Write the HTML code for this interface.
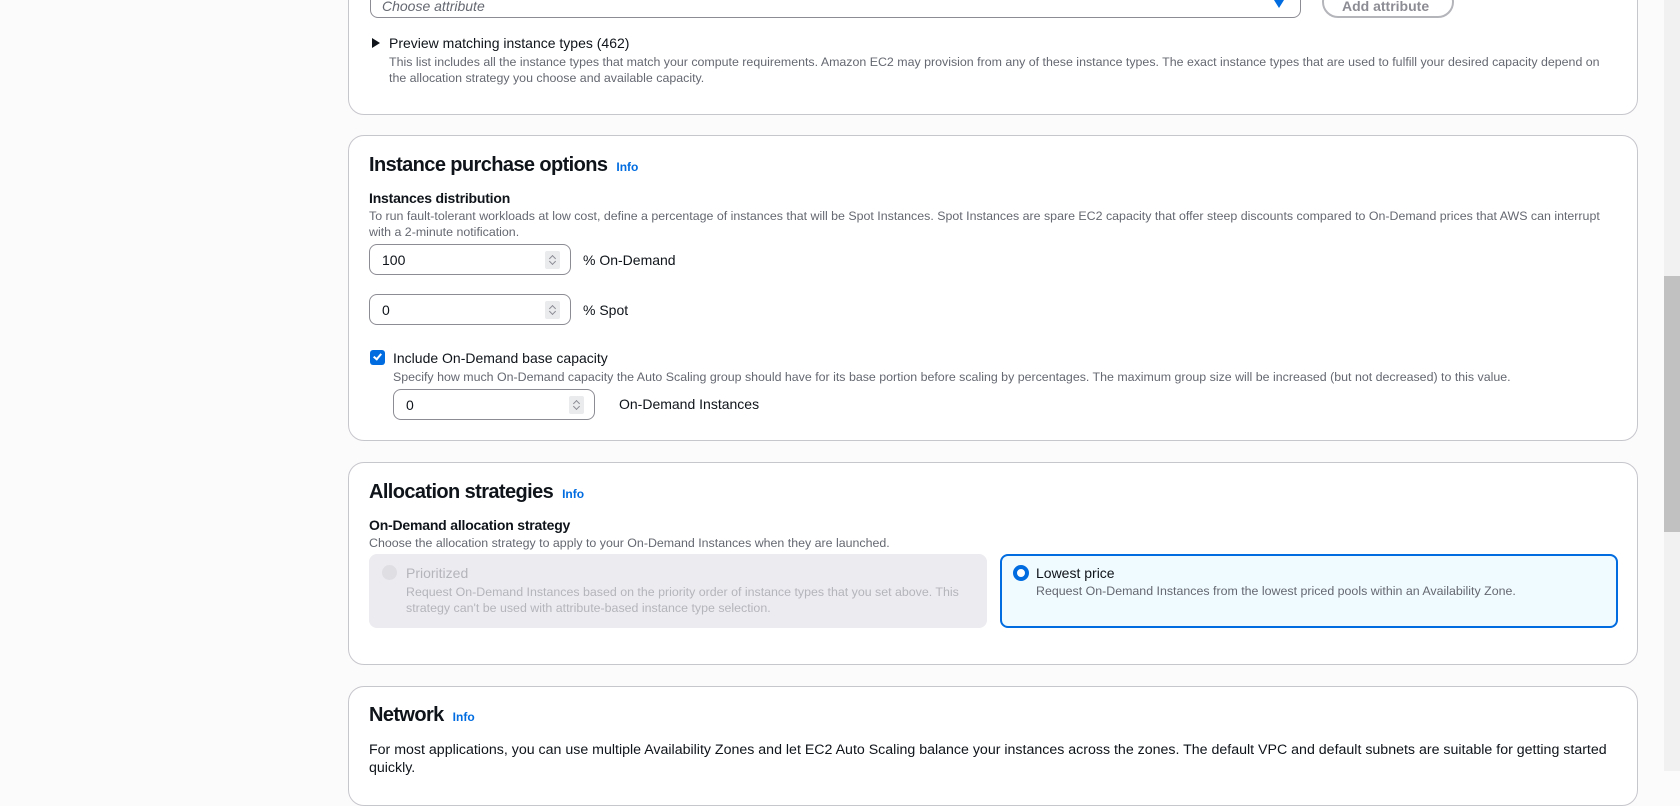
<!DOCTYPE html>
<html><head><style>
*{box-sizing:border-box;margin:0;padding:0}
body{width:1680px;height:771px;overflow:hidden;background:#fbfbfb;font-family:"Liberation Sans",sans-serif;color:#0f141a;position:relative}
.a{position:absolute;white-space:nowrap}
.card{position:absolute;left:348px;width:1290px;background:#fff;border:1px solid #c6c6cd;border-radius:16px}
.h{font-size:20px;font-weight:bold;letter-spacing:-0.6px}
.info{font-size:12px;font-weight:bold;color:#006ce0;letter-spacing:0;margin-left:4px}
.b{font-size:14px;font-weight:bold;letter-spacing:-0.2px}
.d{font-size:12.4px;color:#656871}
.t{font-size:14px}
.inp{position:absolute;width:202px;height:31px;border:1px solid #8c8c94;border-radius:8px;background:#fff;font-size:14px;padding:7px 12px}
.sp{position:absolute;right:10px;top:6px;width:15px;height:18px;background:#e9ebed;border-radius:2px}
.sp:before,.sp:after{content:"";position:absolute;left:5px;width:4px;height:4px;border-left:1px solid #8c8c94;border-top:1px solid #8c8c94}
.sp:before{top:5px;transform:rotate(45deg)}.sp:after{top:8px;transform:rotate(225deg)}
</style></head><body>
<div class="card" style="top:-20px;height:135px"></div>
<div class="a" style="left:370px;top:-12px;width:931px;height:30px;border:1px solid #8c8c94;border-radius:8px;background:#fff"></div>
<div class="a" style="left:382px;top:-2px;font-size:14px;font-style:italic;color:#656871">Choose attribute</div>
<div class="a" style="left:1274px;top:0;width:0;height:0;border-left:5px solid transparent;border-right:5px solid transparent;border-top:8px solid #006ce0"></div>
<div class="a" style="left:1322px;top:-14px;width:132px;height:32px;border:2px solid #b4b4bb;border-radius:20px;background:#fff"></div>
<div class="a" style="left:1342px;top:-2px;font-size:14px;font-weight:bold;color:#8c8c94">Add attribute</div>
<div class="a" style="left:372px;top:38px;width:0;height:0;border-top:5px solid transparent;border-bottom:5px solid transparent;border-left:8px solid #0f141a"></div>
<div class="a t" style="left:389px;top:35px">Preview matching instance types (462)</div>
<div class="a d" style="left:389px;top:54px;line-height:16px">This list includes all the instance types that match your compute requirements. Amazon EC2 may provision from any of these instance types. The exact instance types that are used to fulfill your desired capacity depend on<br>the allocation strategy you choose and available capacity.</div>

<div class="card" style="top:135px;height:306px"></div>
<div class="a h" style="left:369px;top:154px">Instance purchase options <span class="info">Info</span></div>
<div class="a b" style="left:369px;top:190px">Instances distribution</div>
<div class="a d" style="left:369px;top:208px;line-height:16px">To run fault-tolerant workloads at low cost, define a percentage of instances that will be Spot Instances. Spot Instances are spare EC2 capacity that offer steep discounts compared to On-Demand prices that AWS can interrupt<br>with a 2-minute notification.</div>
<div class="inp" style="left:369px;top:244px">100<div class="sp"></div></div>
<div class="a t" style="left:583px;top:252px">% On-Demand</div>
<div class="inp" style="left:369px;top:294px">0<div class="sp"></div></div>
<div class="a t" style="left:583px;top:302px">% Spot</div>
<div class="a" style="left:370px;top:350px;width:15px;height:15px;background:#006ce0;border-radius:3px"></div>
<div class="a" style="left:375px;top:352px;width:5px;height:8px;border-right:2px solid #fff;border-bottom:2px solid #fff;transform:rotate(40deg)"></div>
<div class="a t" style="left:393px;top:350px">Include On-Demand base capacity</div>
<div class="a d" style="left:393px;top:370px">Specify how much On-Demand capacity the Auto Scaling group should have for its base portion before scaling by percentages. The maximum group size will be increased (but not decreased) to this value.</div>
<div class="inp" style="left:393px;top:389px">0<div class="sp"></div></div>
<div class="a t" style="left:619px;top:396px">On-Demand Instances</div>

<div class="card" style="top:462px;height:203px"></div>
<div class="a h" style="left:369px;top:481px">Allocation strategies <span class="info">Info</span></div>
<div class="a b" style="left:369px;top:517px">On-Demand allocation strategy</div>
<div class="a d" style="left:369px;top:536px">Choose the allocation strategy to apply to your On-Demand Instances when they are launched.</div>
<div class="a" style="left:369px;top:554px;width:618px;height:74px;background:#ebebf0;border-radius:8px"></div>
<div class="a" style="left:382px;top:565px;width:15px;height:15px;border-radius:50%;background:#dedee3"></div>
<div class="a t" style="left:406px;top:565px;color:#b4b4bb">Prioritized</div>
<div class="a d" style="left:406px;top:584px;line-height:16px;color:#b4b4bb">Request On-Demand Instances based on the priority order of instance types that you set above. This<br>strategy can't be used with attribute-based instance type selection.</div>
<div class="a" style="left:1000px;top:554px;width:618px;height:74px;background:#f0fbff;border:2px solid #006ce0;border-radius:8px"></div>
<div class="a" style="left:1013px;top:565px;width:16px;height:16px;border-radius:50%;border:4px solid #006ce0;background:#fff"></div>
<div class="a t" style="left:1036px;top:565px">Lowest price</div>
<div class="a d" style="left:1036px;top:584px">Request On-Demand Instances from the lowest priced pools within an Availability Zone.</div>

<div class="card" style="top:686px;height:120px"></div>
<div class="a h" style="left:369px;top:704px">Network <span class="info">Info</span></div>
<div class="a t" style="left:369px;top:741px;line-height:18px;font-size:14.2px">For most applications, you can use multiple Availability Zones and let EC2 Auto Scaling balance your instances across the zones. The default VPC and default subnets are suitable for getting started<br>quickly.</div>

<div class="a" style="left:1664px;top:0;width:16px;height:771px;background:#f1f1f1"></div>
<div class="a" style="left:1664px;top:276px;width:16px;height:256px;background:#c1c1c1"></div>
</body></html>
